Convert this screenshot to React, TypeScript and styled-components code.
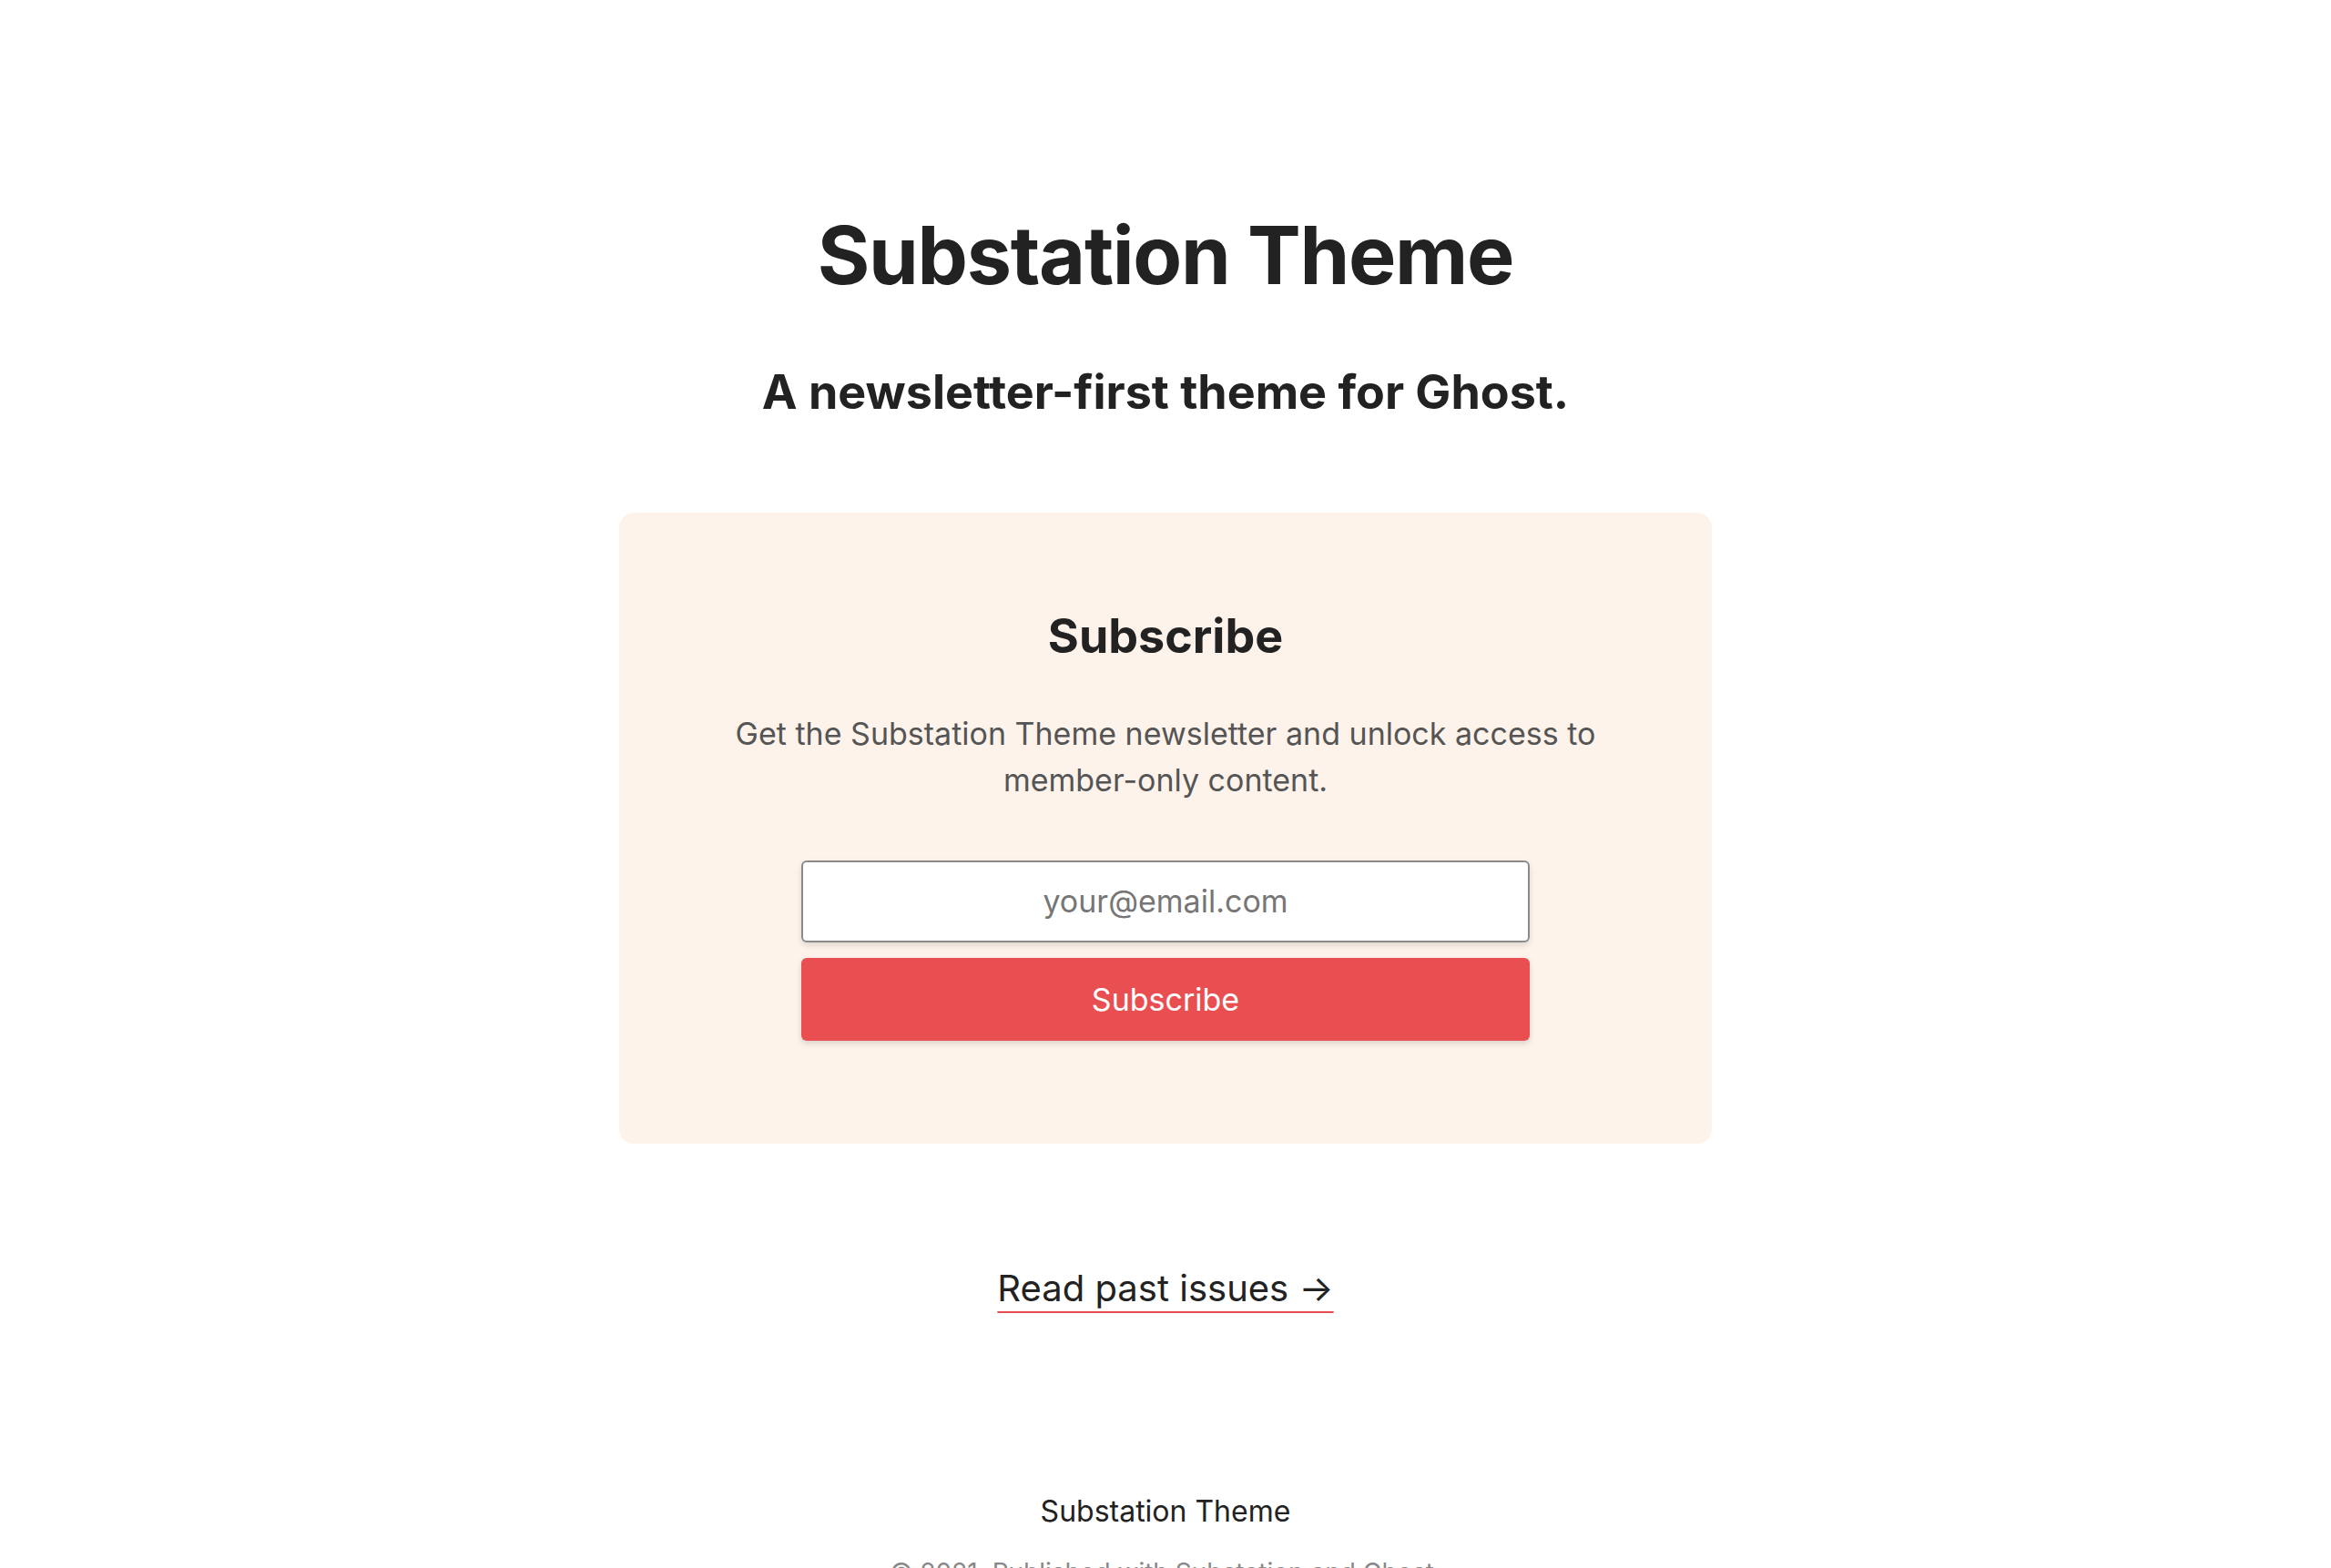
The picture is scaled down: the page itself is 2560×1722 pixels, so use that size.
import React from "react";
import styled, { createGlobalStyle } from "styled-components";

const GlobalStyle = createGlobalStyle`
  html, body {
    margin: 0;
    padding: 0;
    background: #ffffff;
  }
  body {
    font-family: Inter, "Noto Sans", "Liberation Sans", sans-serif;
    color: #222222;
    -webkit-font-smoothing: antialiased;
  }
  * { box-sizing: border-box; }
`;

const Page = styled.main`
  display: flex;
  flex-direction: column;
  align-items: center;
  padding-top: 228px;
  min-height: 1722px;
  overflow: hidden;
`;

const Title = styled.h1`
  margin: 0;
  font-size: 88px;
  line-height: 1.2;
  font-weight: 700;
  letter-spacing: -1.3px;
  color: #222222;
  text-align: center;
`;

const Tagline = styled.h2`
  margin: 63px 0 0;
  font-size: 52px;
  line-height: 1.3;
  font-weight: 700;
  color: #222222;
  text-align: center;
`;

const Card = styled.section`
  margin-top: 99px;
  width: 1200px;
  padding: 105px 120px 113px;
  background: #fdf3eb;
  border-radius: 16px;
  display: flex;
  flex-direction: column;
  align-items: center;
`;

const CardHeading = styled.h3`
  margin: 0;
  font-size: 52px;
  line-height: 1.2;
  font-weight: 700;
  color: #222222;
`;

const CardText = styled.p`
  margin: 49px 0 0;
  font-size: 34px;
  line-height: 1.5;
  color: #555555;
  text-align: center;
`;

const Form = styled.form`
  margin-top: 63px;
  width: 800px;
  display: flex;
  flex-direction: column;
  gap: 17px;
`;

const EmailInput = styled.input`
  height: 90px;
  width: 100%;
  border: 2px solid #8a8a8a;
  border-radius: 6px;
  background: #ffffff;
  font-family: inherit;
  font-size: 34px;
  text-align: center;
  color: #222;
  box-shadow: 0 3px 6px rgba(0, 0, 0, 0.12);
  outline: none;
  &::placeholder {
    color: #767676;
  }
`;

const SubmitButton = styled.button`
  height: 91px;
  width: 100%;
  border: none;
  border-radius: 6px;
  background: #e94f51;
  color: #ffffff;
  font-family: inherit;
  font-size: 34px;
  font-weight: 400;
  box-shadow: 0 3px 6px rgba(0, 0, 0, 0.14);
  cursor: pointer;
`;

const PastLink = styled.a`
  margin-top: 135px;
  font-size: 40px;
  line-height: 1.2;
  color: #222222;
  text-decoration: underline;
  text-decoration-color: #e94f51;
  text-decoration-thickness: 2px;
  text-underline-offset: 11px;
`;

const Footer = styled.footer`
  margin-top: 197px;
  display: flex;
  flex-direction: column;
  align-items: center;
  gap: 22px;
`;

const FooterTitle = styled.div`
  font-size: 32px;
  line-height: 1.5;
  color: #222222;
`;

const Copyright = styled.div`
  font-size: 28px;
  line-height: 1.5;
  color: #888888;
`;

export default function App() {
  return (
    <>
      <GlobalStyle />
      <Page>
        <Title>Substation Theme</Title>
        <Tagline>A newsletter-first theme for Ghost.</Tagline>
        <Card>
          <CardHeading>Subscribe</CardHeading>
          <CardText>
            Get the Substation Theme newsletter and unlock access to member-only content.
          </CardText>
          <Form onSubmit={(e) => e.preventDefault()}>
            <EmailInput type="email" placeholder="your@email.com" />
            <SubmitButton type="submit">Subscribe</SubmitButton>
          </Form>
        </Card>
        <PastLink href="#">Read past issues →</PastLink>
        <Footer>
          <FooterTitle>Substation Theme</FooterTitle>
          <Copyright>© 2021. Published with Substation and Ghost.</Copyright>
        </Footer>
      </Page>
    </>
  );
}
